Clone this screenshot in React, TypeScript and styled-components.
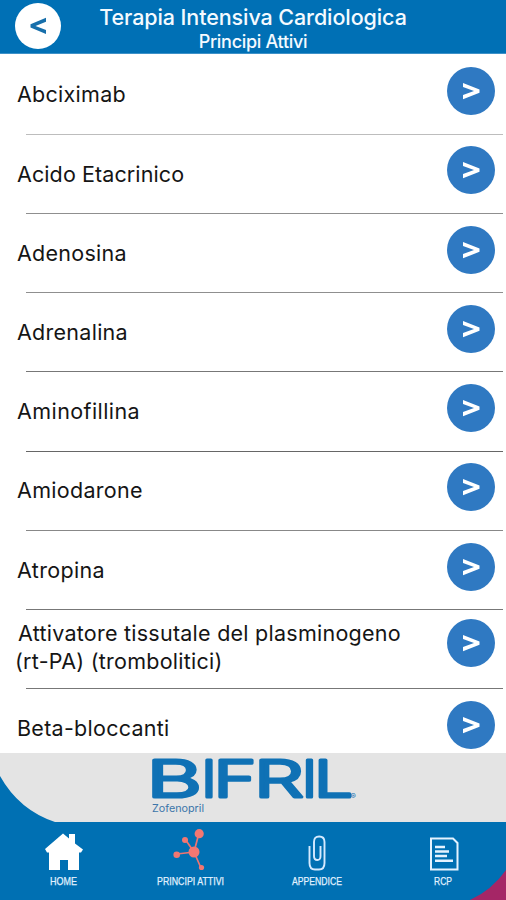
import React from "react";
import styled, { createGlobalStyle } from "styled-components";

const GlobalStyle = createGlobalStyle`
  * { box-sizing: border-box; }
  body { margin: 0; background: #fff; }
  svg { display: block; overflow: visible; }
`;

const Screen = styled.div`
  width: 506px;
  height: 900px;
  overflow: hidden;
  display: flex;
  flex-direction: column;
  background: #fff;
  font-family: Inter, "Liberation Sans", sans-serif;
`;

const Header = styled.header`
  flex: 0 0 54px;
  height: 54px;
  display: grid;
  grid-template-columns: 61px 1fr 61px;
  background: #0070b5;
  border-bottom: 1px solid #3d91c8;
  color: #f4faff;
`;

const BackButton = styled.button`
  width: 46px;
  height: 46px;
  margin: 3px 0 0 15px;
  padding: 0;
  border: 0;
  border-radius: 50%;
  background: #fff;
  display: grid;
  place-items: center;
`;

const Titles = styled.div`
  display: flex;
  flex-direction: column;
  align-items: center;
  white-space: nowrap;
`;

const Title = styled.h1`
  margin: 3px 0 0;
  font-size: 21.5px;
  line-height: 28px;
  font-weight: 450;
  letter-spacing: -0.09px;
`;

const Subtitle = styled.h2`
  margin: 1px 0 0;
  font-size: 18px;
  line-height: 20px;
  font-weight: 450;
  letter-spacing: -0.3px;
`;

const List = styled.ul`
  flex: 0 0 699px;
  margin: 0;
  padding: 2px 0 0;
  list-style: none;
  overflow: hidden;
`;

const Row = styled.li<{ $line: string }>`
  height: 79.2px;
  padding: 0 11px 0 17px;
  display: flex;
  justify-content: space-between;
  align-items: flex-start;
  background: linear-gradient(${(p) => p.$line}, ${(p) => p.$line}) 26px 100% / 477px 1.4px no-repeat;
`;

const Label = styled.span<{ $double?: boolean; $spacing: number }>`
  padding-top: ${(p) => (p.$double ? 9 : 24.4)}px;
  margin-left: ${(p) => (p.$double ? -2 : 0)}px;
  text-indent: ${(p) => (p.$double ? 3 : 0)}px;
  font-size: 21.5px;
  line-height: 28px;
  letter-spacing: ${(p) => p.$spacing}px;
  color: #151515;
  white-space: pre-line;
`;

const OpenButton = styled.button<{ $top: number }>`
  width: 48px;
  height: 48px;
  margin-top: ${(p) => p.$top}px;
  padding: 0;
  border: 0;
  border-radius: 50%;
  background: #2f79c2;
  display: grid;
  place-items: center;
`;

const Brand = styled.div`
  flex: 0 0 69px;
  background: #e4e4e4;
`;

const Nav = styled.nav`
  position: relative;
  flex: 0 0 78px;
  display: grid;
  grid-template-columns: 127px 127px 126px 126px;
  background: #0070b3;
`;

const NavItem = styled.a`
  display: flex;
  flex-direction: column;
  align-items: center;
  color: #e6f4ff;
`;

const Caption = styled.svg`
  font-family: "Liberation Sans", sans-serif;
  font-size: 11.5px;
`;

const Corner = styled.svg`
  position: absolute;
  right: 0;
  bottom: 0;
`;

const items = [
  { name: "Abciximab", line: "#bdbdbd", top: 11, spacing: 0.27 },
  { name: "Acido Etacrinico", line: "#8f8f8f", top: 11.3, spacing: 0.1 },
  { name: "Adenosina", line: "#8f8f8f", top: 11.3, spacing: 0.27 },
  { name: "Adrenalina", line: "#777", top: 11.3, spacing: 0.27 },
  { name: "Aminofillina", line: "#666", top: 11.3, spacing: 0.42 },
  { name: "Amiodarone", line: "#888", top: 11.3, spacing: 0.3 },
  { name: "Atropina", line: "#777", top: 11.5, spacing: 0.35 },
  { name: "Attivatore tissutale del plasminogeno\n(rt-PA) (trombolitici)", line: "#777", top: 8.8, spacing: 0.25, double: true },
  { name: "Beta-bloccanti", line: "transparent", top: 11.3, spacing: 0.27 },
];

const logoLetters = [
  { char: "B", x: 146.5, width: 55.5 },
  { char: "I", x: 201.5, width: 15 },
  { char: "F", x: 213.5, width: 43 },
  { char: "R", x: 254, width: 50 },
  { char: "I", x: 302, width: 15 },
  { char: "L", x: 314, width: 39 },
];

const HomeIcon = () => (
  <svg width="42" height="48" viewBox="0 0 42 48">
    <path d="M2 27 20 11.5 26 16.5V12H32V21.5L40 27.5 38 30.5H36V48H25V38H17V48H6V30.5H4Z" fill="#fff" />
  </svg>
);

const MoleculeIcon = () => (
  <svg width="42" height="48" viewBox="0 0 42 48">
    <path d="M24 30 29 11M24 30 15 17M24 30 7 32M24 30 31 46" stroke="#ee7471" strokeWidth="1.7" />
    <g fill="#f27772">
      <circle cx="24" cy="30" r="5.5" />
      <circle cx="29.2" cy="11.7" r="4.6" />
      <circle cx="15" cy="18" r="3" />
      <circle cx="6.7" cy="32.8" r="3.3" />
      <circle cx="31.5" cy="45.5" r="2.6" />
    </g>
  </svg>
);

const ClipIcon = () => (
  <svg width="42" height="48" viewBox="0 0 42 48" fill="none" stroke="#d5eaff" strokeWidth="1.9">
    <path d="M13.5 24V41Q13.5 47.5 19 47.5H23Q28.5 47.5 28.5 41V20Q28.5 14.5 23.2 14.5T18 20V34Q18 38 21.3 38T24.5 34V24" />
  </svg>
);

const DocumentIcon = () => (
  <svg width="42" height="48" viewBox="0 0 42 48" fill="none" stroke="#e5f3ff" strokeWidth="2">
    <path d="M9 16.5H31L35.5 21V47.5H9Z" />
    <path d="M13 25H23M13 29.5H27M13 34H25M13 38.8H31" strokeWidth="2.5" />
  </svg>
);

const tabs = [
  { label: "HOME", width: 27, icon: <HomeIcon /> },
  { label: "PRINCIPI ATTIVI", width: 67, icon: <MoleculeIcon /> },
  { label: "APPENDICE", width: 50, icon: <ClipIcon /> },
  { label: "RCP", width: 18, icon: <DocumentIcon /> },
];

export default function App() {
  return (
    <Screen>
      <GlobalStyle />
      <Header>
        <BackButton aria-label="Indietro">
          <svg width="46" height="46" viewBox="0 0 46 46">
            <path d="M31 14.8V18.8L20.5 22.9 31 27V31L15.5 24.6V21.2Z" fill="#176fab" />
          </svg>
        </BackButton>
        <Titles>
          <Title>Terapia Intensiva Cardiologica</Title>
          <Subtitle>Principi Attivi</Subtitle>
        </Titles>
      </Header>
      <List>
        {items.map((item) => (
          <Row key={item.name} $line={item.line}>
            <Label $double={item.double} $spacing={item.spacing}>{item.name}</Label>
            <OpenButton $top={item.top} aria-label={item.name}>
              <svg width="48" height="48" viewBox="0 0 48 48">
                <path d="M16 16V20L27 24 16 28V32.3L32.5 25.8V22.5Z" fill="#fff" />
              </svg>
            </OpenButton>
          </Row>
        ))}
      </List>
      <Brand>
        <svg width="506" height="69" viewBox="0 0 506 69">
          <path d="M0 23Q19 57 55 69H0Z" fill="#0070b3" />
          <g fill="#0f71b5" fontFamily="Inter, sans-serif">
            <text y="43.5" fontSize="51" fontWeight="300" stroke="#0f71b5" strokeWidth="3" strokeLinejoin="round">
              {logoLetters.map((l) => (
                <tspan key={l.x} x={l.x} textLength={l.width} lengthAdjust="spacingAndGlyphs">{l.char}</tspan>
              ))}
            </text>
            <text x="350.5" y="46" fontSize="8">®</text>
            <text x="152" y="59" fontSize="10.5" textLength="52" lengthAdjust="spacingAndGlyphs" fill="#3b75a9">Zofenopril</text>
          </g>
        </svg>
      </Brand>
      <Nav>
        <Corner width="36" height="30" viewBox="0 0 36 30">
          <path d="M0 30Q22 20 36 0V30Z" fill="#a52666" />
        </Corner>
        {tabs.map((tab) => (
          <NavItem key={tab.label}>
            {tab.icon}
            <Caption width={tab.width + 4} height="20">
              <text x="2" y="14.5" textLength={tab.width} lengthAdjust="spacingAndGlyphs" fill="#e2f2ff" stroke="#e2f2ff" strokeWidth="0.25">
                {tab.label}
              </text>
            </Caption>
          </NavItem>
        ))}
      </Nav>
    </Screen>
  );
}
